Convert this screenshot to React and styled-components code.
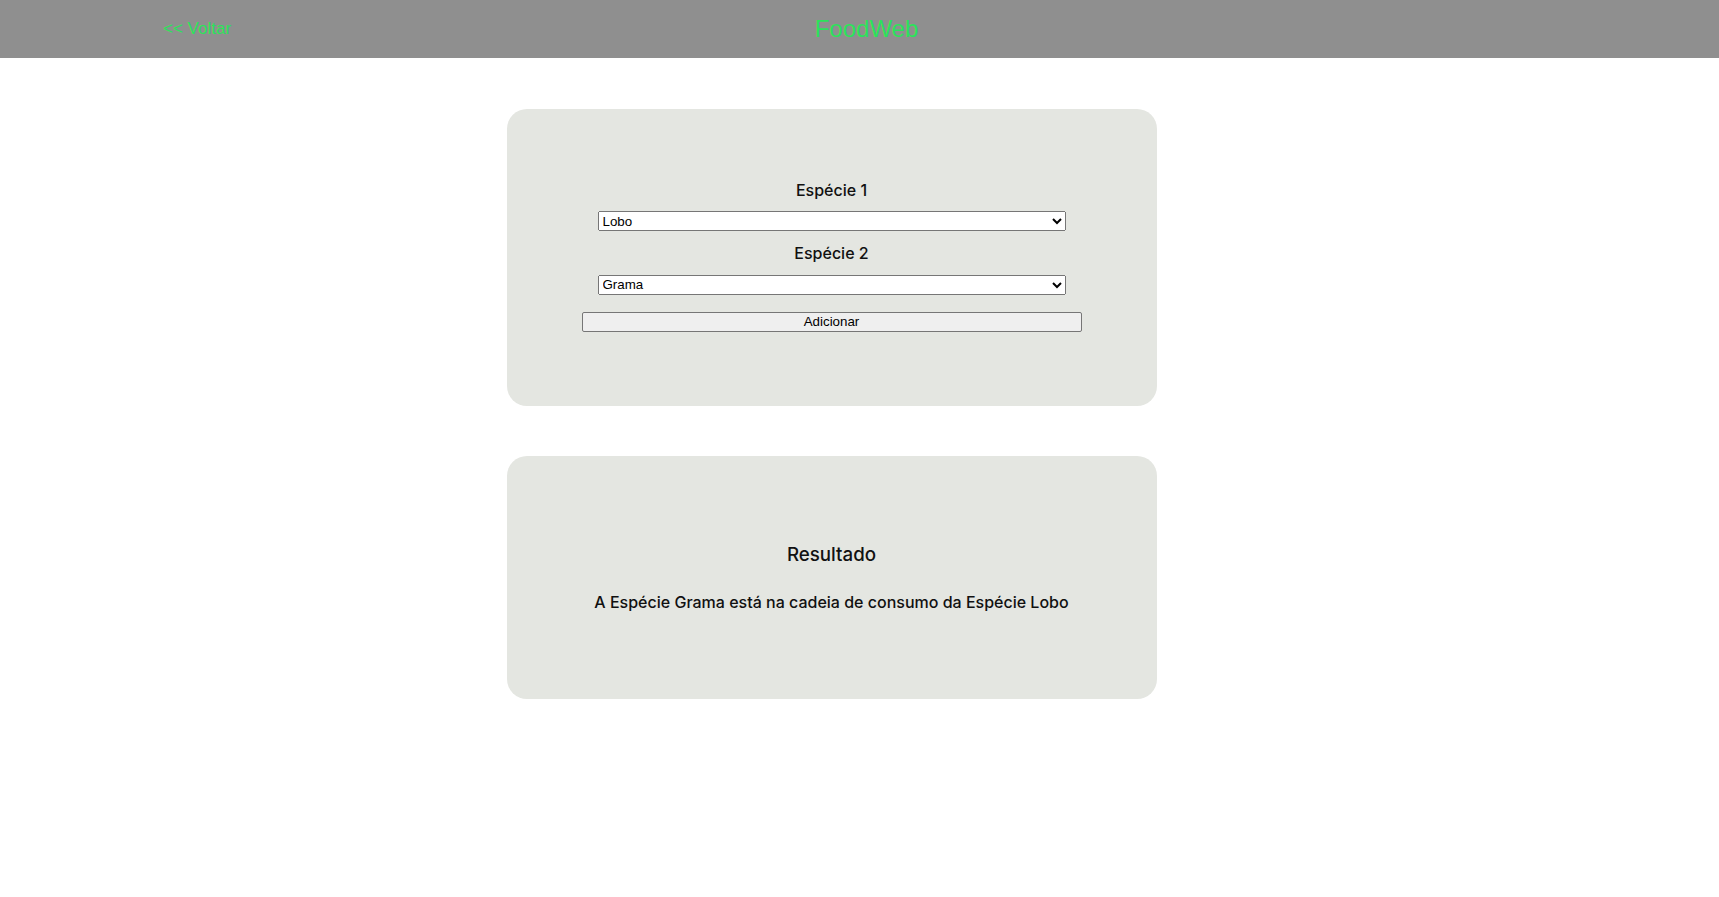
import React, { useState } from "react";
import styled, { createGlobalStyle } from "styled-components";

const GlobalStyle = createGlobalStyle`
  body {
    margin: 0;
    background: #ffffff;
    font-family: Inter, "Noto Sans", sans-serif;
  }
`;

const Header = styled.header`
  display: grid;
  grid-template-columns: 1fr auto 1fr;
  align-items: center;
  height: 58px;
  padding: 0 149px 0 163px;
  background-color: #8f8f8f;
  font-family: "Liberation Sans", Arial, sans-serif;
  color: #2be35a;
`;

const BackLink = styled.a`
  justify-self: start;
  font-size: 17px;
  color: #2be35a;
  text-decoration: none;
  cursor: pointer;
`;

const Title = styled.h1`
  margin: 0;
  font-size: 24px;
  font-weight: normal;
`;

const Main = styled.main`
  display: flex;
  flex-direction: column;
  align-items: center;
  gap: 50px;
  padding: 51px 56px 0 0;
`;

const Card = styled.section`
  box-sizing: border-box;
  width: 650px;
  height: ${(p) => p.$height}px;
  display: flex;
  flex-direction: column;
  align-items: center;
  justify-content: ${(p) => (p.$center ? "center" : "flex-start")};
  padding-top: ${(p) => (p.$center ? 0 : 70.5)}px;
  background-color: #e4e6e1;
  border-radius: 20px;
  color: #111;
`;

const Label = styled.label`
  font-size: 16px;
  font-weight: 500;
  margin-bottom: 11.5px;
`;

const Select = styled.select`
  width: 468px;
  height: 20px;
  font-family: "Liberation Sans", Arial, sans-serif;
  font-size: 13.333px;
  margin-bottom: 12px;
  &:last-of-type {
    margin-bottom: 0;
  }
`;

const Button = styled.button`
  width: 500px;
  height: 20px;
  margin-top: 17px;
  padding: 0;
  font-family: "Liberation Sans", Arial, sans-serif;
  font-size: 13.333px;
  color: #000;
  background-color: #efefef;
  border: 1px solid #767676;
  border-radius: 2px;
`;

const ResultTitle = styled.h3`
  margin: 0 0 26px;
  font-size: 18.72px;
  font-weight: 500;
`;

const ResultText = styled.p`
  margin: 0;
  font-size: 16px;
  font-weight: 500;
`;

const species = ["Lobo", "Grama", "Coelho", "Raposa"];

export default function App() {
  const [a, setA] = useState("Lobo");
  const [b, setB] = useState("Grama");

  return (
    <>
      <GlobalStyle />
      <Header>
        <BackLink>&lt;&lt; Voltar</BackLink>
        <Title>FoodWeb</Title>
      </Header>
      <Main>
        <Card $height={297}>
          <Label>Espécie 1</Label>
          <Select value={a} onChange={(e) => setA(e.target.value)}>
            {species.map((s) => (
              <option key={s}>{s}</option>
            ))}
          </Select>
          <Label>Espécie 2</Label>
          <Select value={b} onChange={(e) => setB(e.target.value)}>
            {species.map((s) => (
              <option key={s}>{s}</option>
            ))}
          </Select>
          <Button>Adicionar</Button>
        </Card>
        <Card $height={243} $center>
          <ResultTitle>Resultado</ResultTitle>
          <ResultText>A Espécie Grama está na cadeia de consumo da Espécie Lobo</ResultText>
        </Card>
      </Main>
    </>
  );
}
